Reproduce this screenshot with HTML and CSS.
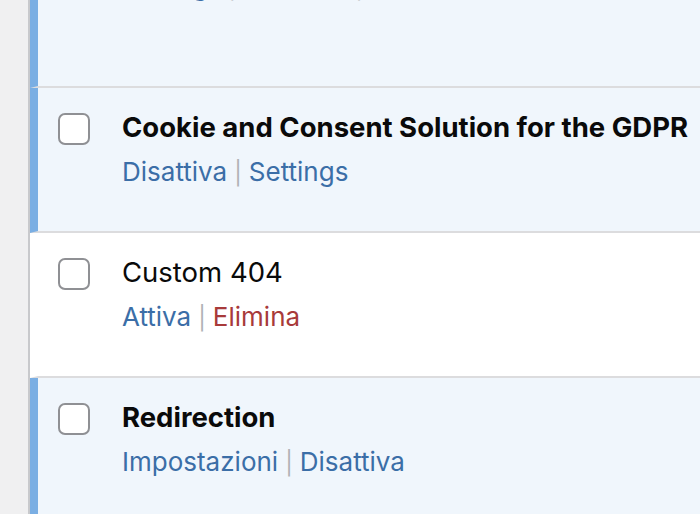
FILE: index.html
```html
<!DOCTYPE html>
<html>
<head>
<meta charset="utf-8">
<link rel="stylesheet" href="styles.css">
</head>
<body>
<div class="page">
  <div class="sidebar"></div>
  <div class="list">
    <div class="row active partial">
      <div class="check-col"></div>
      <div class="info">
        <div class="actions top-actions">
          <a class="link">Settings</a><span class="sep">|</span><a class="link">Disattiva</a><span class="sep">|</span><a class="link">Docs</a>
        </div>
      </div>
    </div>
    <div class="row active">
      <div class="check-col"><span class="checkbox"></span></div>
      <div class="info">
        <div class="title bold">Cookie and Consent Solution for the GDPR</div>
        <div class="actions"><a class="link">Disattiva</a><span class="sep">|</span><a class="link">Settings</a></div>
      </div>
    </div>
    <div class="row">
      <div class="check-col"><span class="checkbox"></span></div>
      <div class="info">
        <div class="title">Custom 404</div>
        <div class="actions"><a class="link">Attiva</a><span class="sep">|</span><a class="link delete">Elimina</a></div>
      </div>
    </div>
    <div class="row active">
      <div class="check-col"><span class="checkbox"></span></div>
      <div class="info">
        <div class="title bold">Redirection</div>
        <div class="actions"><a class="link">Impostazioni</a><span class="sep">|</span><a class="link">Disattiva</a></div>
      </div>
    </div>
  </div>
</div>
</body>
</html>
```

FILE: styles.css
```css
html, body {
  margin: 0;
  padding: 0;
  height: 100%;
  overflow: hidden;
  background: #ffffff;
  font-family: Inter, "Noto Sans", "Liberation Sans", sans-serif;
}
.page {
  display: flex;
  height: 514px;
}
.sidebar {
  width: 28px;
  flex: none;
  background: #f0f0f1;
  border-right: 2px solid #c8c9cc;
}
.list {
  flex: 1;
  display: flex;
  flex-direction: column;
  min-width: 0;
}
.row {
  display: flex;
  height: 143px;
  border-bottom: 2px solid #dcdcde;
  border-left: 8px solid transparent;
  background: #ffffff;
  flex: none;
}
.row.active {
  background: #f0f6fc;
  border-left-color: #7aaee3;
}
.row.partial {
  height: 86px;
  overflow: hidden;
}
.check-col {
  width: 84px;
  flex: none;
  padding-top: 25px;
  padding-left: 20px;
  box-sizing: border-box;
}
.checkbox {
  display: block;
  width: 32px;
  height: 32px;
  box-sizing: border-box;
  border: 2px solid #8f9094;
  border-radius: 7px;
  background: #ffffff;
}
.info {
  padding-top: 22px;
}
.title {
  font-size: 27.5px;
  line-height: 34px;
  color: #0a0a0a;
  white-space: nowrap;
}
.title.bold {
  font-weight: 700;
}
.actions {
  margin-top: 12px;
  font-size: 26px;
  line-height: 32px;
  white-space: nowrap;
}
.top-actions {
  margin-top: -52px;
}
.link {
  color: #3b6ea7;
}
.link.delete {
  color: #a83a3a;
}
.sep {
  color: #b0b2b5;
  margin: 0 7px;
  font-size: 23px;
}
```
